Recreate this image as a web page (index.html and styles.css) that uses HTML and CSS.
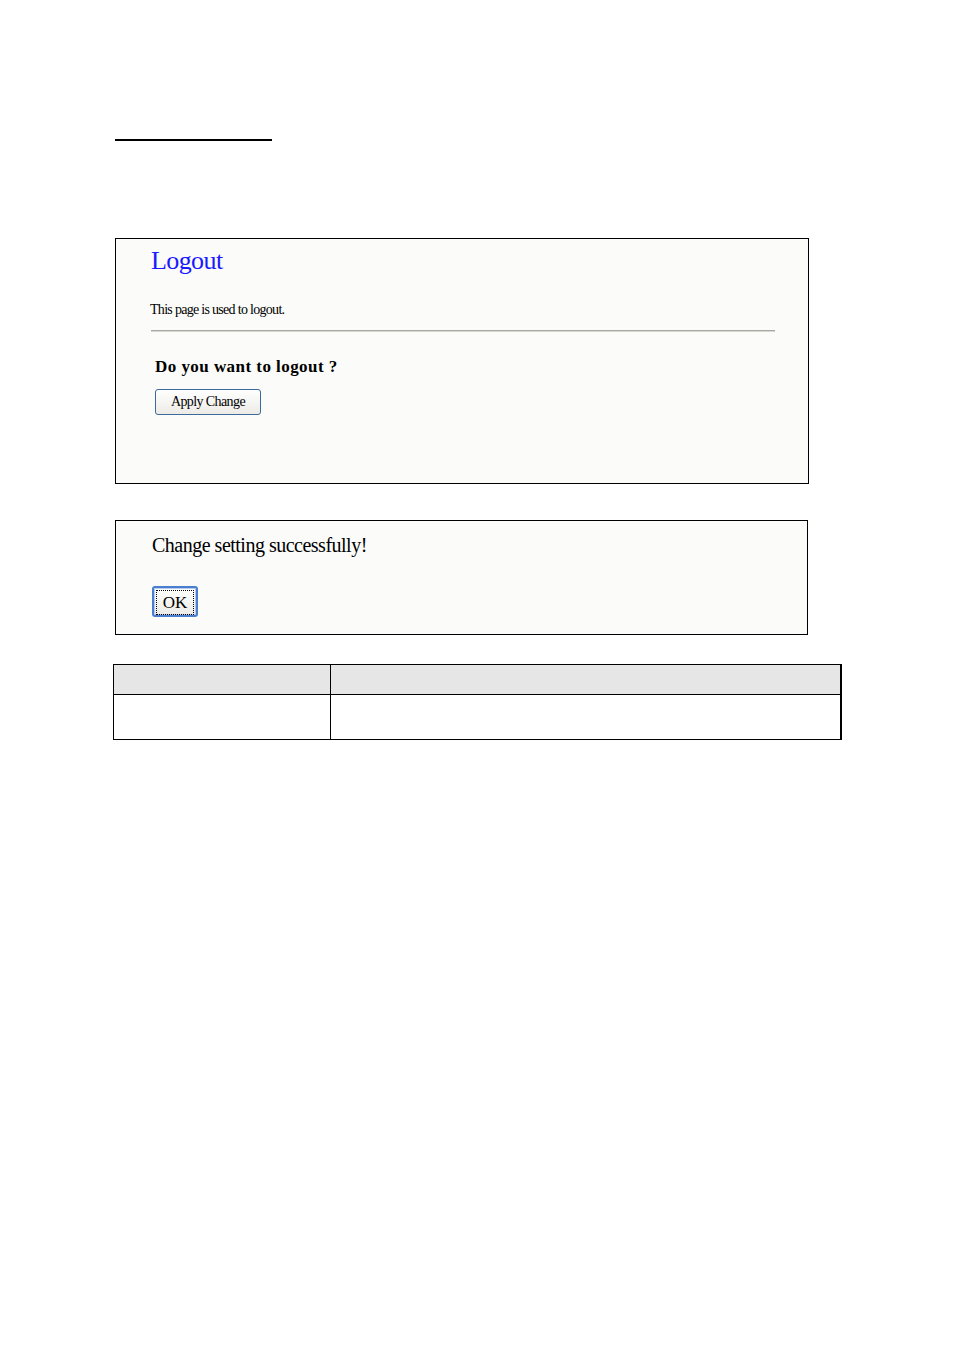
FILE: index.html
```html
<!DOCTYPE html>
<html lang="en">
<head>
  <meta charset="UTF-8">
  <title>Logout</title>
  <link rel="stylesheet" href="styles.css">
</head>
<body>
<div class="page">
  <div class="heading-rule"></div>

  <div class="panel logout-panel">
    <h1 class="panel-title">Logout</h1>
    <p class="panel-desc">This page is used to logout.</p>
    <hr class="panel-hr">
    <p class="question">Do you want to logout ?</p>
    <button class="btn apply-btn" type="button">Apply Change</button>
  </div>

  <div class="panel result-panel">
    <p class="result-msg">Change setting successfully!</p>
    <button class="btn ok-btn" type="button"><span class="focus-ring">OK</span></button>
  </div>

  <table class="info-table">
    <tr class="head-row"><th class="col-a"></th><th></th></tr>
    <tr class="body-row"><td class="col-a"></td><td></td></tr>
  </table>
</div>
</body>
</html>
```

FILE: styles.css
```css
html,body{margin:0;padding:0;background:#fff;}
body{font-family:"Liberation Serif","DejaVu Serif",serif;color:#000;}
.page{padding:139px 0 0 115px;}

.heading-rule{width:157px;height:2px;background:#000;}

.panel{box-sizing:border-box;border:1px solid #000;background:#fbfcfa;}
.logout-panel{width:694px;height:246px;margin-top:97px;padding:6px 0 0 35px;}
.result-panel{width:693px;height:115px;margin-top:36px;padding:11px 0 0 36px;}

.panel-title{margin:0;font-weight:normal;font-size:26px;line-height:32px;color:#1a1aff;letter-spacing:-0.6px;}
.panel-desc{margin:24px 0 0 -1px;font-size:14px;line-height:17px;letter-spacing:-0.7px;}
.panel-hr{margin:12px 0 0;width:624px;height:0;border:0;border-top:1px solid #a9a9a2;border-bottom:1px solid #d6d6d0;}

.question{margin:25px 0 0 4px;font-size:17px;line-height:20px;font-weight:bold;letter-spacing:0.45px;}

.btn{font-family:"Liberation Serif","DejaVu Serif",serif;color:#000;cursor:pointer;background:linear-gradient(#ffffff,#ecebe6);border:1px solid #3c6a9c;border-radius:3px;padding:0;}
.apply-btn{display:block;margin:12px 0 0 4px;width:106px;height:26px;font-size:14px;letter-spacing:-0.6px;}

.result-msg{margin:0;font-size:20px;line-height:26px;letter-spacing:-0.5px;}
.ok-btn{display:block;margin:28px 0 0 0;width:46px;height:31px;font-size:17px;border:2px solid #4a7fd0;box-shadow:inset 0 0 0 1px #b8cdee;}
.focus-ring{display:block;margin:2px;height:23px;line-height:23px;border:1px dotted #000;}

.info-table{margin:29px 0 0 -2px;border-collapse:collapse;width:729px;}
.info-table th,.info-table td{border:1px solid #000;padding:0;}
.info-table td:last-child,.info-table th:last-child{border-right-width:2px;}
.head-row th{height:29px;background:#e6e6e6;}
.body-row td{height:44px;background:#fff;}
.col-a{width:216px;}
```
